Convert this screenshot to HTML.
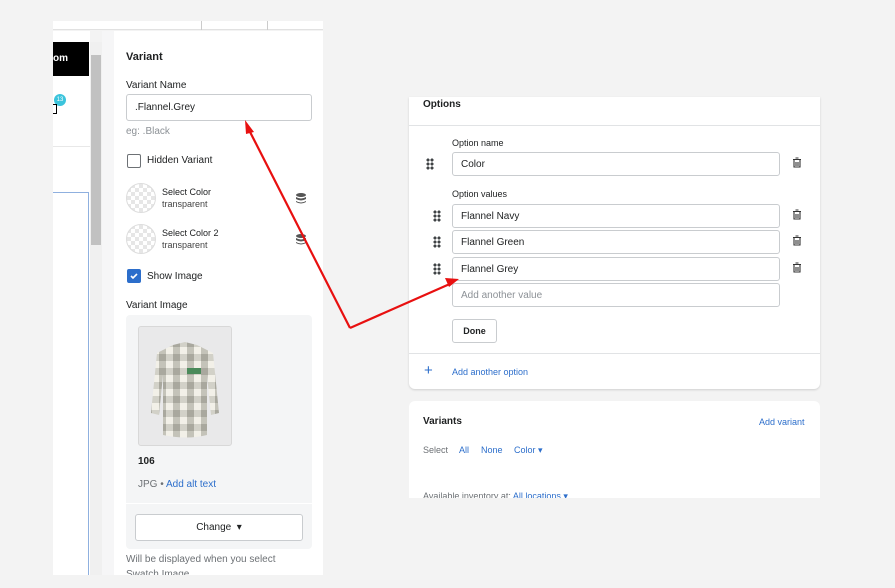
<!DOCTYPE html>
<html><head><meta charset="utf-8"><style>
*{box-sizing:border-box;margin:0;padding:0}
body{width:895px;height:588px;background:#f3f3f3;font-family:"Liberation Sans",sans-serif;position:relative;overflow:hidden;color:#202223}
.abs{position:absolute}
.t{position:absolute;white-space:nowrap}
.inp{position:absolute;border:1px solid #c9cccf;border-radius:3px;background:#fff;font-size:10px;padding-left:8px;display:flex;align-items:center}
.chk{position:absolute;width:14px;height:14px;border-radius:2px}
.sw{position:absolute;width:30px;height:30px;border-radius:50%;border:1px solid #ddd;background:repeating-conic-gradient(#e6e6e6 0 25%,#fff 0 50%) 0 0/8px 8px}
.drag{position:absolute;width:8px;height:12px;background:radial-gradient(circle,#3f4245 1.4px,transparent 1.7px) 0 0/4px 4px}
.link{color:#2c6ecb}
</style></head><body>
<div class="abs" style="left:53px;top:21px;width:270px;height:9px;background:#fff;border-bottom:1px solid #e1e1e1"></div>
<div class="abs" style="left:201px;top:21px;width:1px;height:9px;background:#ccc"></div>
<div class="abs" style="left:267px;top:21px;width:1px;height:9px;background:#ccc"></div>
<div class="abs" style="left:53px;top:31px;width:37px;height:544px;background:#fff"></div>
<div class="abs" style="left:53px;top:42px;width:36px;height:34px;background:#000"></div>
<div class="t" style="left:53px;top:53px;color:#fff;font-size:10px;font-weight:bold">om</div>
<div class="abs" style="left:54px;top:94px;width:12px;height:12px;border-radius:50%;background:#3bc4dc;color:#fff;font-size:6px;text-align:center;line-height:12px">13</div>
<div class="abs" style="left:53px;top:104px;width:4px;height:10px;border:1px solid #000;border-left:none"></div>
<div class="abs" style="left:53px;top:146px;width:37px;height:1px;background:#e8e8e8"></div>
<div class="abs" style="left:53px;top:192px;width:36px;height:383px;border:1px solid #8fb0df;border-left:none;border-bottom:none;background:#fff"></div>
<div class="abs" style="left:90px;top:42px;width:12px;height:533px;background:#f0f0f0"></div>
<div class="abs" style="left:91px;top:55px;width:10px;height:190px;background:#c1c1c1"></div>
<div class="abs" style="left:102px;top:31px;width:12px;height:544px;background:#f6f6f7"></div>
<div class="abs" style="left:114px;top:31px;width:209px;height:544px;background:#fff"></div>
<div class="t" style="left:126px;top:51px;font-size:11px;font-weight:bold">Variant</div>
<div class="t" style="left:126px;top:80px;font-size:10px">Variant Name</div>
<div class="inp" style="left:126px;top:94px;width:186px;height:27px">.Flannel.Grey</div>
<div class="t" style="left:126px;top:126px;font-size:10px;color:#8c9196">eg: .Black</div>
<div class="chk" style="left:127px;top:154px;border:1.5px solid #6d7175"></div>
<div class="t" style="left:147px;top:155px;font-size:10px">Hidden Variant</div>
<div class="sw" style="left:126px;top:183px"></div>
<div class="t" style="left:162px;top:187px;font-size:9px">Select Color</div>
<div class="t" style="left:162px;top:199px;font-size:9px;color:#444">transparent</div>
<div class="sw" style="left:126px;top:224px"></div>
<div class="t" style="left:162px;top:228px;font-size:9px">Select Color 2</div>
<div class="t" style="left:162px;top:240px;font-size:9px;color:#444">transparent</div>
<svg class="abs" style="left:296px;top:193px" width="10" height="11" viewBox="0 0 10 11"><ellipse cx="5" cy="2" rx="5" ry="2" fill="#555"/><path d="M0 4q5 3 10 0v2q-5 3-10 0zM0 8q5 3 10 0v1q-5 3-10 0z" fill="#555"/></svg>
<svg class="abs" style="left:296px;top:234px" width="10" height="11" viewBox="0 0 10 11"><ellipse cx="5" cy="2" rx="5" ry="2" fill="#555"/><path d="M0 4q5 3 10 0v2q-5 3-10 0zM0 8q5 3 10 0v1q-5 3-10 0z" fill="#555"/></svg>
<div class="chk" style="left:127px;top:269px;background:#2c6ecb"><svg width="14" height="14" viewBox="0 0 14 14"><path d="M4 7l2 2 4-4" stroke="#fff" stroke-width="1.6" fill="none"/></svg></div>
<div class="t" style="left:147px;top:271px;font-size:10px">Show Image</div>
<div class="t" style="left:126px;top:300px;font-size:10px">Variant Image</div>
<div class="abs" style="left:126px;top:315px;width:186px;height:234px;background:#f4f5f6;border-radius:4px"></div>
<div class="abs" style="left:126px;top:503px;width:186px;height:1px;background:#fff"></div>
<div class="abs" style="left:138px;top:326px;width:94px;height:120px;background:#e9e9ea;border:1px solid #d8d8d8;border-radius:3px"></div>
<svg class="abs" style="left:145px;top:340px" width="80" height="100" viewBox="0 0 80 100"><defs><pattern id="p" width="14" height="14" patternUnits="userSpaceOnUse"><rect width="14" height="14" fill="#f2f0e8"/><rect width="7" height="14" fill="#c4c3b9"/><rect width="14" height="7" fill="#d2d1c8"/><rect width="7" height="7" fill="#a9a89e"/></pattern></defs><path d="M28 5l12-3 12 3 16 8 6 60-8 2-4-40 0 60q-20 5-44 0l0-60-4 40-8-2 6-60z" fill="url(#p)"/><rect x="42" y="28" width="14" height="6" fill="#4a8a5a"/></svg>
<div class="t" style="left:138px;top:456px;font-size:10px;font-weight:bold">106</div>
<div class="t" style="left:138px;top:479px;font-size:10px;color:#6d7175">JPG • <span class="link">Add alt text</span></div>
<div class="abs" style="left:135px;top:514px;width:168px;height:27px;border:1px solid #c9cccf;border-radius:3px;background:#fff;font-size:10px;text-align:center;line-height:25px">Change &nbsp;▾</div>
<div class="t" style="left:126px;top:554px;font-size:10px;color:#6d7175">Will be displayed when you select</div>
<div class="t" style="left:126px;top:569px;font-size:10px;color:#6d7175;height:6px;overflow:hidden">Swatch Image</div>
<div class="abs" style="left:409px;top:97px;width:411px;height:292px;background:#fff;border-radius:0 0 6px 6px;box-shadow:0 1px 2px rgba(0,0,0,.15)"></div>
<div class="t" style="left:423px;top:99px;font-size:10px;font-weight:bold">Options</div>
<div class="abs" style="left:409px;top:125px;width:411px;height:1px;background:#e1e3e5"></div>
<div class="t" style="left:452px;top:138px;font-size:9px">Option name</div>
<div class="drag" style="left:426px;top:158px"></div>
<div class="inp" style="left:452px;top:152px;width:328px;height:24px">Color</div>
<div class="t" style="left:452px;top:189px;font-size:9px">Option values</div>
<div class="drag" style="left:433px;top:210px"></div><div class="inp" style="left:452px;top:204px;width:328px;height:24px">Flannel Navy</div>
<div class="drag" style="left:433px;top:236px"></div><div class="inp" style="left:452px;top:230px;width:328px;height:24px">Flannel Green</div>
<div class="drag" style="left:433px;top:263px"></div><div class="inp" style="left:452px;top:257px;width:328px;height:24px">Flannel Grey</div>
<div class="inp" style="left:452px;top:283px;width:328px;height:24px;color:#8c9196">Add another value</div>
<svg class="abs" style="left:792px;top:157px" width="10" height="11" viewBox="0 0 10 11"><path d="M1 2.5h8M3.5 1h3M2 3v7h6V3M4 5v4M6 5v4" stroke="#333" stroke-width="1.1" fill="none"/></svg>
<svg class="abs" style="left:792px;top:209px" width="10" height="11" viewBox="0 0 10 11"><path d="M1 2.5h8M3.5 1h3M2 3v7h6V3M4 5v4M6 5v4" stroke="#333" stroke-width="1.1" fill="none"/></svg>
<svg class="abs" style="left:792px;top:235px" width="10" height="11" viewBox="0 0 10 11"><path d="M1 2.5h8M3.5 1h3M2 3v7h6V3M4 5v4M6 5v4" stroke="#333" stroke-width="1.1" fill="none"/></svg>
<svg class="abs" style="left:792px;top:262px" width="10" height="11" viewBox="0 0 10 11"><path d="M1 2.5h8M3.5 1h3M2 3v7h6V3M4 5v4M6 5v4" stroke="#333" stroke-width="1.1" fill="none"/></svg>
<div class="abs" style="left:452px;top:319px;width:45px;height:24px;border:1px solid #c9cccf;border-radius:3px;font-size:9px;font-weight:bold;text-align:center;line-height:22px">Done</div>
<div class="abs" style="left:409px;top:353px;width:411px;height:1px;background:#e1e3e5"></div>
<div class="t" style="left:424px;top:362px;font-size:15px;color:#2c6ecb">+</div>
<div class="t link" style="left:452px;top:367px;font-size:9px">Add another option</div>
<div class="abs" style="left:409px;top:401px;width:411px;height:97px;background:#fff;border-radius:6px 6px 0 0"></div>
<div class="t" style="left:423px;top:416px;font-size:10px;font-weight:bold">Variants</div>
<div class="t link" style="left:759px;top:417px;font-size:9px">Add variant</div>
<div class="t" style="left:423px;top:445px;font-size:9px;color:#6d7175">Select</div>
<div class="t link" style="left:459px;top:445px;font-size:9px">All</div>
<div class="t link" style="left:481px;top:445px;font-size:9px">None</div>
<div class="t link" style="left:514px;top:445px;font-size:9px">Color ▾</div>
<div class="t" style="left:423px;top:491px;font-size:9px;color:#6d7175;height:7px;overflow:hidden">Available inventory at: <span class="link">All locations ▾</span></div>
<svg class="abs" style="left:0;top:0" width="895" height="588"><g stroke="#e81010" stroke-width="2.2" fill="none"><path d="M350 328L247 126M350 328L452 283"/></g><path d="M245 120l9 12-8 2z" fill="#e81010"/><path d="M459 279l-14-1 4 9z" fill="#e81010"/></svg>
</body></html>
